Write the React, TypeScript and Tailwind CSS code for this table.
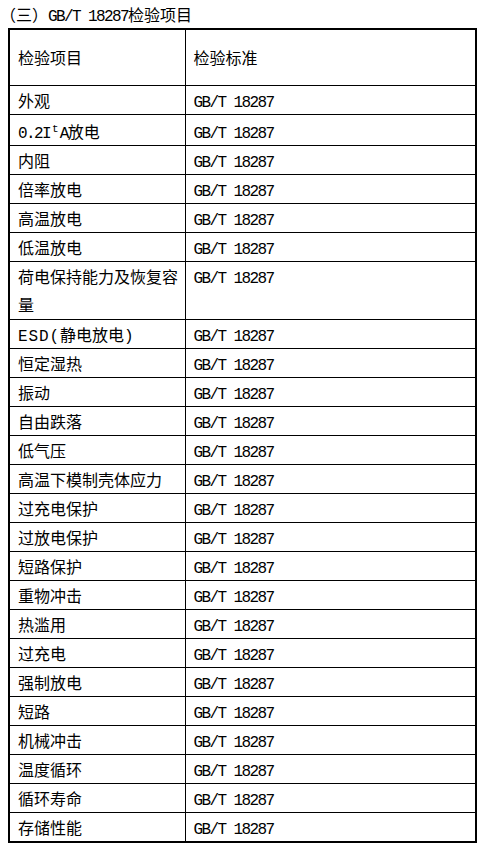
import type { ReactNode } from "react";

// Latin runs are set in a narrow mono so they sit at half the CJK width,
// like the SimSun page this table came from.
function L({ children, wide }: { children: ReactNode; wide?: boolean }) {
  return (
    <span
      className={
        wide
          ? "font-['Liberation_Mono',monospace] leading-none tracking-[0.9px]"
          : "font-['Liberation_Mono',monospace] leading-none tracking-[-1.6px]"
      }
    >
      {children}
    </span>
  );
}

const STD = "GB/T 18287";

type Row = { item: ReactNode; tall?: boolean; sup?: boolean };

const ROWS: Row[] = [
  { item: "外观" },
  {
    sup: true,
    item: (
      <>
        <L>0.2I</L>
        <sup className="text-[11px] leading-none font-['Liberation_Mono',monospace] -top-[6px] mr-[1px] ml-[2px]">t</sup>
        <L>A</L>放电
      </>
    ),
  },
  { item: "内阻" },
  { item: "倍率放电" },
  { item: "高温放电" },
  { item: "低温放电" },
  {
    tall: true,
    item: (
      <>
        荷电保持能力及恢复容
        <br />量
      </>
    ),
  },
  {
    item: (
      <>
        <L wide>ESD(</L>静电放电<L>)</L>
      </>
    ),
  },
  { item: "恒定湿热" },
  { item: "振动" },
  { item: "自由跌落" },
  { item: "低气压" },
  { item: "高温下模制壳体应力" },
  { item: "过充电保护" },
  { item: "过放电保护" },
  { item: "短路保护" },
  { item: "重物冲击" },
  { item: "热滥用" },
  { item: "过充电" },
  { item: "强制放电" },
  { item: "短路" },
  { item: "机械冲击" },
  { item: "温度循环" },
  { item: "循环寿命" },
  { item: "存储性能" },
];

export default function App() {
  return (
    <div className="w-[485px] h-[846px] bg-white text-black font-['Noto_Sans_CJK_SC',sans-serif] text-[16px] overflow-hidden">
      <div className="h-[28px] leading-[28px] whitespace-nowrap">
        （三）<L>{STD}</L>检验项目
      </div>
      <table className="ml-[8px] w-[469px] border-collapse border-2 border-black table-fixed">
        <colgroup>
          <col className="w-[176px]" />
          <col />
        </colgroup>
        <thead>
          <tr className="h-[56px]">
            <th className="border border-black px-[8px] py-0 text-left font-normal align-middle leading-[28px]">检验项目</th>
            <th className="border border-black px-[8px] py-0 text-left font-normal align-middle leading-[28px]">检验标准</th>
          </tr>
        </thead>
        <tbody>
          {ROWS.map((r, i) => (
            <tr key={i} className={r.sup ? "h-[31px]" : r.tall ? "h-[58px]" : "h-[29px]"}>
              <td
                className={
                  r.sup
                    ? "border border-black pl-[8px] pr-0 pt-[3px] pb-0 leading-[27px] align-top whitespace-nowrap"
                    : "border border-black pl-[8px] pr-0 py-0 leading-[28px] align-top whitespace-nowrap"
                }
              >
                {r.item}
              </td>
              <td
                className={
                  r.sup
                    ? "border border-black px-[8px] pt-[3px] pb-0 leading-[27px] align-top whitespace-nowrap"
                    : "border border-black px-[8px] py-0 leading-[28px] align-top whitespace-nowrap"
                }
              >
                <L>{STD}</L>
              </td>
            </tr>
          ))}
        </tbody>
      </table>
    </div>
  );
}
